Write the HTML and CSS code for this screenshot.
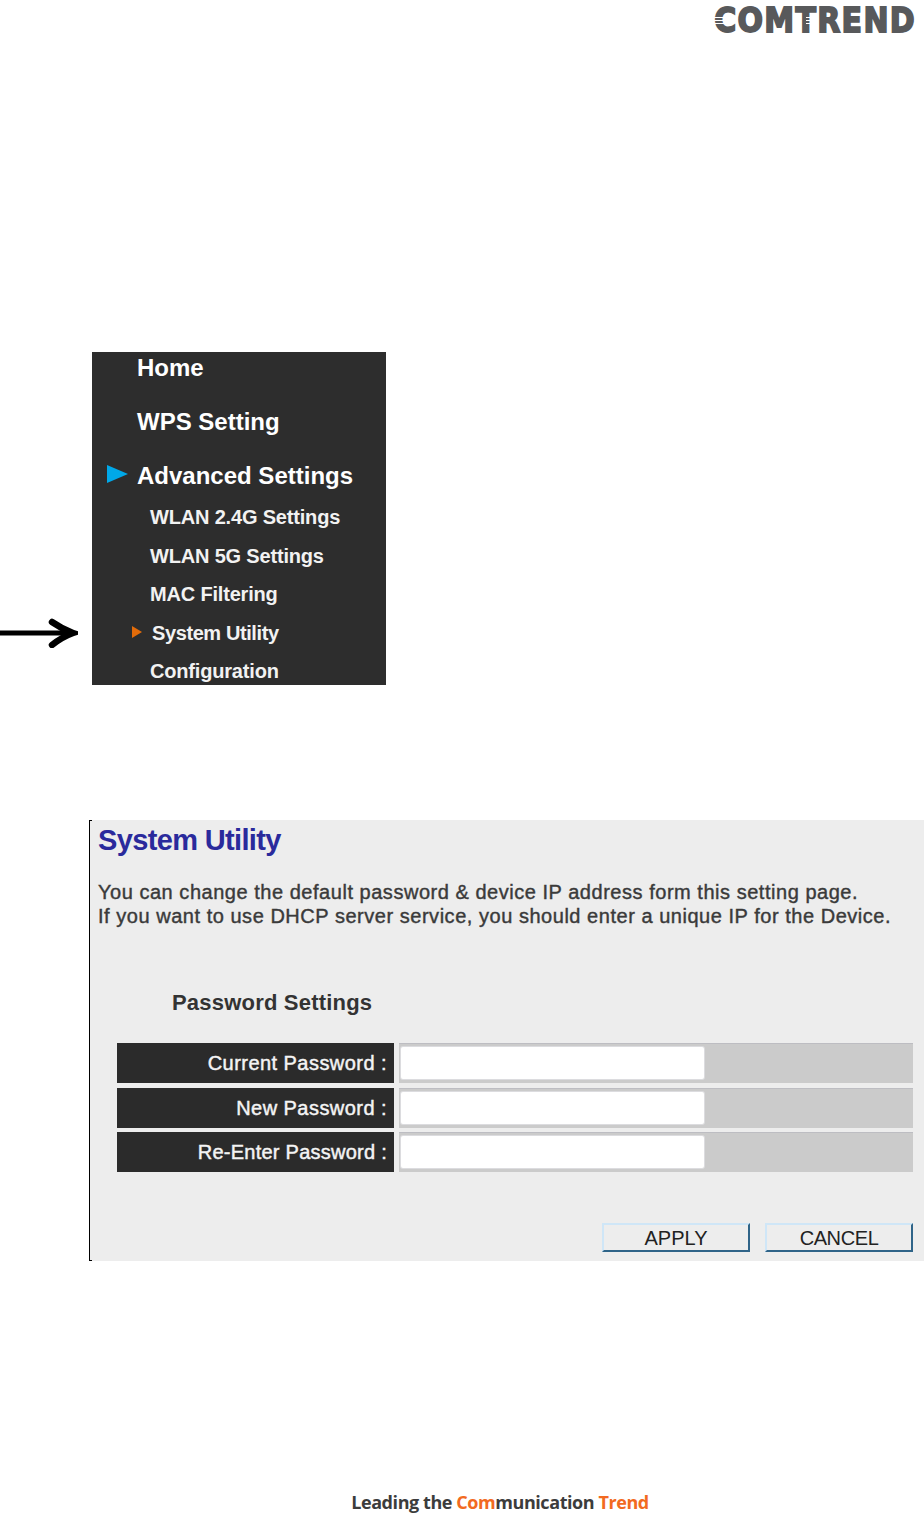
FILE: index.html
```html
<!DOCTYPE html>
<html lang="en">
<head>
<meta charset="utf-8">
<title>System Utility</title>
<link rel="stylesheet" href="styles.css">
</head>
<body>
<header class="doc-header">
  <div class="logo"><span class="logo-text">COMTREND</span><span class="stripes stripes-c"></span><span class="stripes stripes-t"></span></div>
</header>
<section class="menu-row">
  <svg class="pointer" width="78" height="30" viewBox="0 0 78 30" aria-hidden="true">
    <path d="M0 15H70" stroke="#000" stroke-width="5" fill="none"/>
    <path d="M52 4Q62 11 73 15Q62 19 52 27" stroke="#000" stroke-width="6.5" fill="none" stroke-linejoin="miter" stroke-linecap="round"/>
  </svg>
  <nav class="menu">
    <div class="item item-home">Home</div>
    <div class="item item-wps">WPS Setting</div>
    <div class="item item-adv"><span class="tri-blue"></span>Advanced Settings</div>
    <div class="sub">WLAN 2.4G Settings</div>
    <div class="sub">WLAN 5G Settings</div>
    <div class="sub">MAC Filtering</div>
    <div class="sub sub-active"><span class="tri-orange"></span>System Utility</div>
    <div class="sub">Configuration</div>
  </nav>
</section>
<section class="panel">
  <h1 class="title">System Utility</h1>
  <p class="intro">You can change the default password &amp; device IP address form this setting page.<br>If you want to use DHCP server service, you should enter a unique IP for the Device.</p>
  <h2 class="section-title">Password Settings</h2>
  <div class="rows">
    <div class="row"><div class="label">Current Password :</div><div class="value"><div class="input"></div></div></div>
    <div class="row"><div class="label">New Password :</div><div class="value"><div class="input"></div></div></div>
    <div class="row"><div class="label label-tight">Re-Enter Password :</div><div class="value"><div class="input"></div></div></div>
  </div>
  <div class="actions">
    <button class="btn" type="button">APPLY</button>
    <button class="btn btn-cancel" type="button">CANCEL</button>
  </div>
</section>
<footer class="doc-footer">Leading the <span class="orange">Com</span>munication <span class="orange">Trend</span></footer>
</body>
</html>
```
FILE: styles.css
```css
* { box-sizing: border-box; }
html, body { margin: 0; padding: 0; }
body {
  width: 924px;
  height: 1527px;
  overflow: hidden;
  background: #fff;
  font-family: "Liberation Sans", Arial, sans-serif;
  color: #333;
}
.doc-header {
  height: 352px;
  display: flex;
  justify-content: flex-end;
  align-items: flex-start;
  padding: 3px 8px 0 0;
}
.logo { position: relative; }
.logo-text {
  display: block;
  font-family: "DejaVu Sans", sans-serif;
  font-weight: 700;
  font-size: 30px;
  line-height: 32px;
  letter-spacing: 1.3px;
  color: #58595b;
  -webkit-text-stroke: 1.6px #58595b;
  transform: scaleY(1.12);
  transform-origin: top;
}
.stripes {
  position: absolute;
  height: 9px;
  background: repeating-linear-gradient(to bottom, #fff 0, #fff 1px, transparent 1px, transparent 3px);
}
.stripes-c { left: -1px; top: 14px; width: 11px; }
.stripes-t { left: 92px; top: 14px; width: 8px; }
.menu-row {
  height: 333px;
  display: flex;
  align-items: flex-start;
}
.pointer { flex: none; margin: 266px 14px 0 0; }
.menu {
  width: 294px;
  height: 333px;
  background: #2d2d2d;
  color: #fff;
  font-weight: 700;
  overflow: hidden;
}
.item {
  position: relative;
  font-size: 24px;
  line-height: 28px;
  padding-left: 45px;
}
.item-home { margin-top: 2px; }
.item-wps { margin-top: 26px; }
.item-adv { margin-top: 26px; margin-bottom: 15px; }
.tri-blue {
  position: absolute;
  left: 15px;
  top: 3px;
  border-left: 21px solid #00a8e8;
  border-top: 9px solid transparent;
  border-bottom: 9px solid transparent;
}
.sub {
  position: relative;
  font-size: 20px;
  line-height: 24px;
  padding-left: 58px;
  margin-bottom: 14.6px;
  letter-spacing: -0.18px;
  color: #f2f2f2;
}
.sub-active { padding-left: 60px; letter-spacing: -0.4px; }
.tri-orange {
  position: absolute;
  left: 40px;
  top: 5px;
  border-left: 10px solid #e36c0a;
  border-top: 6px solid transparent;
  border-bottom: 6px solid transparent;
}
.panel {
  margin: 135px 0 0 89px;
  width: 835px;
  height: 441px;
  background: #ededed;
  border-left: 1px solid #000;
  padding: 0 11px 0 8px;
  position: relative;
}
.panel::before, .panel::after {
  content: "";
  position: absolute;
  left: 0;
  width: 2px;
  height: 1px;
  background: #000;
}
.panel::before { top: 0; }
.panel::after { bottom: 0; }
.title {
  margin: 0;
  padding-top: 3px;
  font-size: 29px;
  line-height: 34px;
  font-weight: 700;
  color: #2a2a9c;
  letter-spacing: -0.65px;
}
.intro {
  margin: 23px 0 0;
  font-size: 20px;
  line-height: 24px;
  letter-spacing: 0.53px;
  color: #3a3a3a;
  -webkit-text-stroke: 0.4px #3a3a3a;
}
.section-title {
  margin: 62px 0 0 74px;
  font-size: 22px;
  line-height: 26px;
  font-weight: 700;
  letter-spacing: 0.2px;
  color: #333;
}
.rows {
  margin: 27px 0 0 19px;
  display: flex;
  flex-direction: column;
  gap: 4.5px;
}
.row { display: flex; gap: 5px; height: 40px; }
.label {
  width: 277px;
  background: #2b2b2b;
  color: #f4f4f4;
  font-size: 20px;
  font-weight: 400;
  letter-spacing: 0.45px;
  -webkit-text-stroke: 0.45px #f4f4f4;
  line-height: 40px;
  text-align: right;
  padding-right: 7px;
}
.label-tight { letter-spacing: 0.25px; }
.value {
  flex: 1;
  background: #cbcbcb;
  padding: 3px 0 3px 2px;
  border-top: 1px solid #bdbdc2;
}
.input {
  width: 303px;
  height: 32px;
  background: #fff;
  border-radius: 2px;
  box-shadow: 0 0 0 1px #dcdcdf;
}
.actions {
  margin: 51px 0 0;
  display: flex;
  justify-content: flex-end;
  gap: 15px;
}
.btn {
  width: 148px;
  height: 29px;
  padding: 0;
  background: #ededed;
  border-style: solid;
  border-width: 2px;
  border-color: #cfe6f7 #2f6488 #2f6488 #cfe6f7;
  font-family: "Liberation Sans", Arial, sans-serif;
  font-size: 20px;
  line-height: 27px;
  color: #222;
}
.btn-cancel { letter-spacing: -0.4px; }
.doc-footer {
  margin-top: 229px;
  margin-left: 76px;
  text-align: center;
  padding-right: 0;
  font-family: "Open Sans", sans-serif;
  font-weight: 700;
  font-size: 18px;
  line-height: 24px;
  letter-spacing: -0.43px;
  color: #3c3c3c;
}
.orange { color: #f26a21; }
```
